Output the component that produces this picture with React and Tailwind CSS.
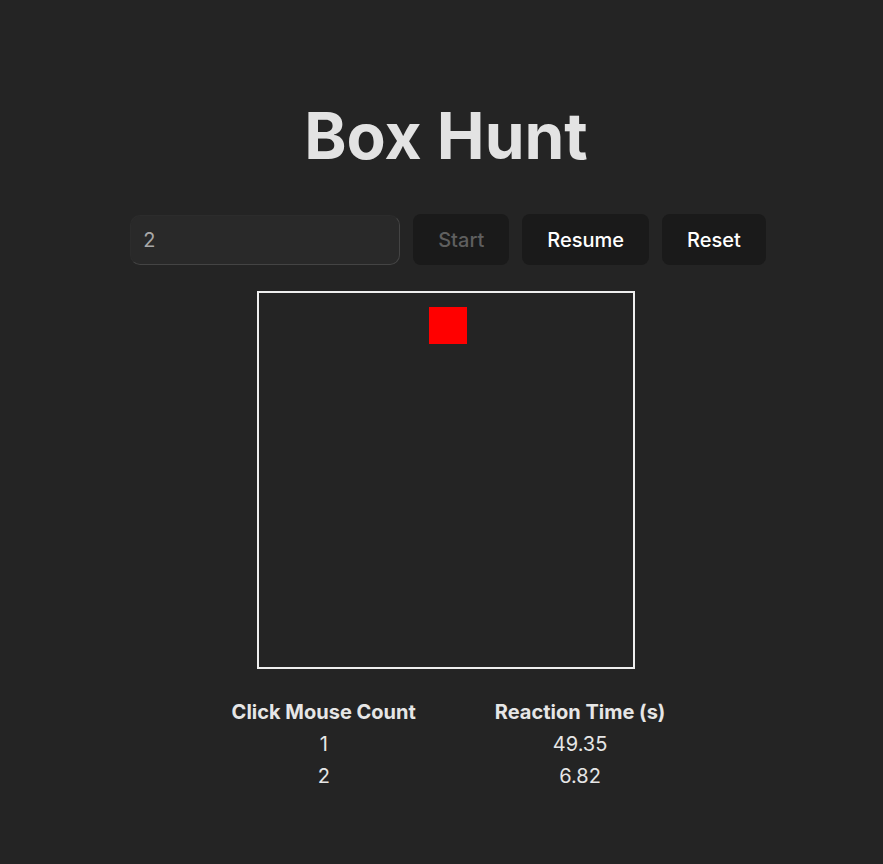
import React from "react";

export default function App() {
  const rows = [
    ["1", "49.35"],
    ["2", "6.82"],
  ];
  return (
    <div className="min-h-screen w-full bg-[#242424] text-[#dedede]" style={{ fontFamily: "Inter, 'Liberation Sans', sans-serif" }}>
      <div className="flex flex-col items-center pt-[101px] pl-[9px]">
        <h1 className="text-[64px] font-bold leading-[70px] text-[#e3e3e3]">Box Hunt</h1>
        <div className="mt-[43px] flex items-center gap-[13px] pl-[4px]">
          <input
            defaultValue="2"
            className="h-[50px] w-[270px] rounded-[10px] border border-[#2c2c2c] border-r-[#444] border-b-[#444] bg-[#292929] pl-[12px] text-[20px] text-[#a8a8a8] outline-none"
          />
          <button disabled className="h-[51px] rounded-[8px] bg-[#1a1a1a] px-[25px] text-[20px] font-medium text-[#5f5f5f]">Start</button>
          <button className="h-[51px] rounded-[8px] bg-[#1a1a1a] px-[25px] text-[20px] font-medium text-white">Resume</button>
          <button className="h-[51px] rounded-[8px] bg-[#1a1a1a] px-[25px] text-[20px] font-medium text-white">Reset</button>
        </div>
        <div className="relative mt-[26px] mr-[1px] h-[378px] w-[378px] border-2 border-[#eeeeee]">
          <div className="absolute left-[170px] top-[14px] h-[37px] w-[38px] bg-[#ff0000]" />
        </div>
        <div className="mt-[27px] ml-[5px] grid grid-cols-[auto_auto] gap-x-[79px] text-[20px] leading-[32px] text-[#e6e6e6]">
          <div className="text-center font-bold">Click Mouse Count</div>
          <div className="text-center font-bold">Reaction Time (s)</div>
          {rows.map(([a, b]) => (
            <React.Fragment key={a}>
              <div className="text-center">{a}</div>
              <div className="text-center">{b}</div>
            </React.Fragment>
          ))}
        </div>
      </div>
    </div>
  );
}
